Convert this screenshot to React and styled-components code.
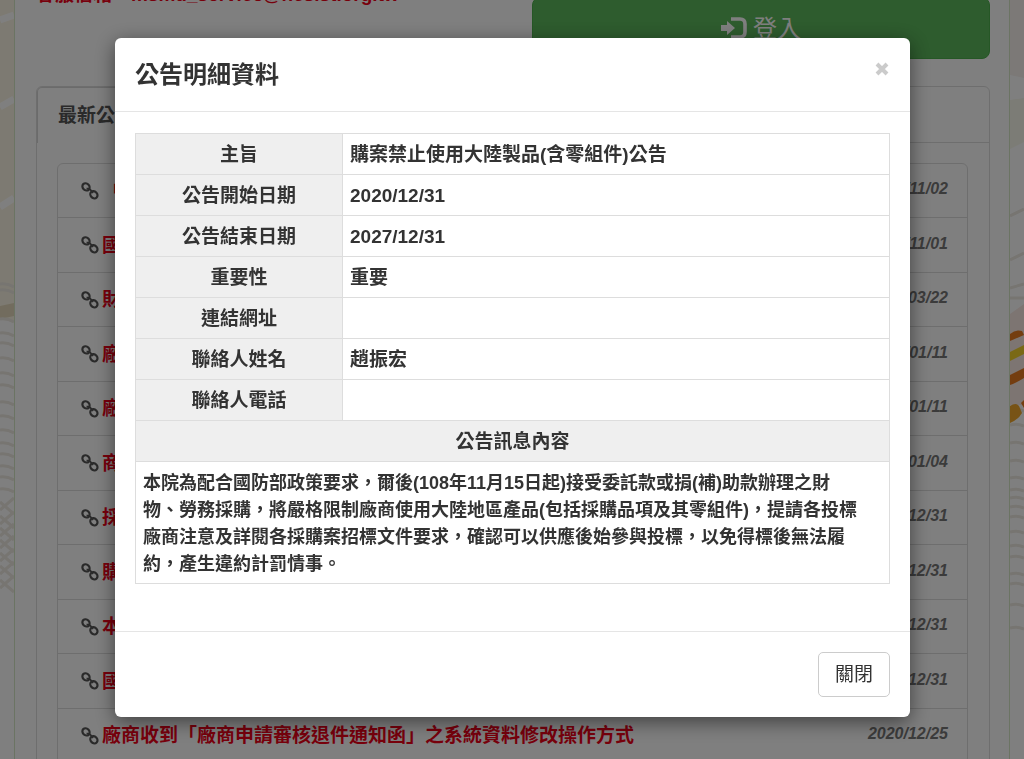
import React from 'react';
import styled, { createGlobalStyle } from 'styled-components';

const GlobalStyle = createGlobalStyle`
  * { box-sizing: border-box; }
  html, body { height: 100%; }
  body {
    margin: 0;
    overflow: hidden;
    background: #fff;
    color: #333;
    font-family: "Liberation Sans", "Noto Sans CJK TC", sans-serif;
    font-size: 19px;
    line-height: 27px;
  }
`;

const Page = styled.div`
  display: flex;
  height: 100vh;
  overflow: hidden;
`;

const Side = styled.div`
  flex: 0 0 14px;
  overflow: hidden;
  svg { display: block; }
`;

const Content = styled.div`
  flex: 1;
  min-width: 0;
  padding: 0 19px 0 21px;
  border: solid #d6e9c6;
  border-width: 0 1px;
`;

const Header = styled.header`
  display: flex;
  justify-content: space-between;
  align-items: flex-start;
  margin-top: -24px;
`;

const Contact = styled.p`
  margin: 0;
  color: #f00018;
  font-weight: 700;
  line-height: 38px;
  white-space: nowrap;
`;

const LoginButton = styled.button`
  display: flex;
  justify-content: center;
  align-items: center;
  gap: 6px;
  width: 48%;
  height: 62px;
  margin-top: 21px;
  border: 1px solid #4cae4c;
  border-radius: 8px;
  background: #5cb85c;
  color: #fff;
  font: inherit;
  font-size: 24px;
`;

const Panel = styled.section`
  margin-top: 27px;
  border: 1px solid #ddd;
  border-radius: 6px;
  height: 800px;
`;

const TabBar = styled.div`
  display: flex;
  height: 56px;
  border-bottom: 1px solid #ddd;
`;

const Tab = styled.button`
  height: 56px;
  padding: 0 20px;
  border: solid #d6d6d6;
  border-width: 1px 1px 0;
  border-radius: 5px 5px 0 0;
  background: #fff;
  color: #555;
  font: inherit;
  font-weight: 700;
`;

const NewsList = styled.ul`
  list-style: none;
  margin: 20px 21px 0 20px;
  padding: 0;
  border: 1px solid #ddd;
  border-radius: 6px;
`;

const NewsRow = styled.li`
  display: flex;
  align-items: center;
  height: 54px;
  padding: 0 19px 0 23px;
  border-bottom: 1px solid #ddd;
  &:nth-child(even) { height: 55px; }
`;

const NewsLink = styled.a`
  flex: 1;
  margin-left: 3px;
  color: #f00018;
  font-weight: 700;
  text-decoration: none;
  white-space: pre;
`;

const NewsDate = styled.time`
  padding-bottom: 4px;
  color: #777;
  font-size: 16px;
  font-style: italic;
  font-weight: 700;
`;

const Backdrop = styled.div`
  position: fixed;
  inset: 0;
  padding: 38px 16px 0 17px;
  background: rgba(0, 0, 0, 0.5);
`;

const Dialog = styled.div`
  max-width: 795px;
  margin: 0 auto;
  border-radius: 6px;
  background: #fff;
  box-shadow: 0 5px 20px rgba(0, 0, 0, 0.5);
`;

const DialogHeader = styled.div`
  display: flex;
  justify-content: space-between;
  align-items: flex-start;
  padding: 20px;
  border-bottom: 1px solid #e5e5e5;
`;

const Title = styled.h4`
  margin: 0;
  font-size: 24px;
  font-weight: 700;
  line-height: 33px;
`;

const CloseIcon = styled.button`
  display: flex;
  padding: 3px 0;
  border: 0;
  background: none;
  color: #000;
  opacity: 0.2;
`;

const DialogBody = styled.div`
  padding: 21px 20px 47px;
`;

const DetailTable = styled.table`
  width: 100%;
  border-collapse: collapse;
  table-layout: fixed;
  th, td {
    height: 41px;
    padding: 6px 7px;
    border: 1px solid #ddd;
    font-weight: 700;
    text-align: left;
  }
  th {
    background: #efefef;
    text-align: center;
  }
  th[scope="row"] { width: 207px; }
`;

const Message = styled.td`
  && {
    padding-top: 8px;
    padding-bottom: 5px;
    font-size: 18px;
  }
`;

const DialogFooter = styled.div`
  display: flex;
  justify-content: flex-end;
  padding: 20px;
  border-top: 1px solid #e5e5e5;
`;

const CloseButton = styled.button`
  padding: 8px 16px;
  border: 1px solid #ccc;
  border-radius: 5px;
  background: #fff;
  color: #333;
  font: inherit;
`;

const LinkIcon = () => (
  <svg width="18" height="18" viewBox="0 0 18 18" fill="none" stroke="#555" strokeWidth="2.2" aria-hidden="true">
    <ellipse cx="5" cy="4.9" rx="3.9" ry="3.3" transform="rotate(45 5 4.9)" />
    <ellipse cx="12.9" cy="12.8" rx="3.9" ry="3.3" transform="rotate(45 12.9 12.8)" />
    <path d="M5.6 6.6Q9.5 6 11.8 11.2" strokeWidth="1.8" />
  </svg>
);

const LoginIcon = () => (
  <svg width="26" height="22" viewBox="0 0 26 22" aria-hidden="true">
    <path d="M0 8h6V4l8 7-8 7v-4H0z" fill="#fff" />
    <path d="M10 2h9q5 0 5 5v8q0 5-5 5h-9" fill="none" stroke="#fff" strokeWidth="3.6" />
  </svg>
);

const CrossIcon = () => (
  <svg width="16" height="16" viewBox="0 0 16 16" aria-hidden="true">
    <path d="M3 3L13 13M13 3L3 13" stroke="currentColor" strokeWidth="4" />
  </svg>
);

const leftWaves = [284, 290, 319, 333, 343, 358, 373, 385, 402, 416, 430, 443, 454, 466, 477, 489];
const leftTangle = [502, 516, 528, 540, 553, 566, 580];

const LeftArt = () => (
  <svg width="14" height="759" fill="none" aria-hidden="true">
    <path d="M0 0H14V320H0z" fill="#fbf5e4" />
    <path d="M0 306L14 303V316L0 319z" fill="#e4d9bd" />
    <g stroke="#fff" strokeWidth="7">
      <path d="M0 20L14 15M0 107L14 99M0 207L14 198" />
    </g>
    <g stroke="#eeeae3" strokeWidth="3">
      {leftWaves.map((y) => <path key={y} d={`M0 ${y}Q7 ${y - 1} 14 ${y + 3}`} />)}
      {leftTangle.map((y) => <path key={y} d={`M0 ${y + 8}L14 ${y - 4}M0 ${y}L14 ${y + 12}`} />)}
    </g>
  </svg>
);

const rightWaves = [410, 425, 443, 461, 478, 490, 498, 507, 517, 532, 546, 557, 574, 584, 605, 628];

const RightArt = () => (
  <svg width="14" height="759" fill="none" aria-hidden="true">
    <path d="M0 0H14V78L0 75z" fill="#f8f3ef" />
    <path d="M0 100L14 98V142L0 149z" fill="#f8f8ec" />
    <g stroke="#eeeae3" strokeWidth="3">
      <path d="M0 216L14 209M0 260L14 253M0 288L14 284M0 298H14" />
      {rightWaves.map((y) => <path key={y} d={`M0 ${y}Q7 ${y - 2} 14 ${y + 1}`} />)}
    </g>
    <path d="M0 314L14 304V405H0z" fill="#faeae5" />
    <path d="M0 334Q6 329 12 331L14 335L0 341z" fill="#e87a20" />
    <path d="M0 352L14 345V354L0 361z" fill="#f4d32c" />
    <path d="M0 375L14 368V378Q6 383 0 385z" fill="#e87a20" />
    <path d="M0 406Q6 402 9 406L12 413Q8 420 0 423z" fill="#f0a72c" />
    <path d="M11 403L14 400V408z" fill="#e87a20" />
  </svg>
);

const news = [
  ['\u00a0\u00a0中', '2022/11/02'],
  ['國', '2022/11/01'],
  ['財', '2022/03/22'],
  ['廠', '2022/01/11'],
  ['廠', '2022/01/11'],
  ['商', '2021/01/04'],
  ['採', '2020/12/31'],
  ['購', '2020/12/31'],
  ['本', '2020/12/31'],
  ['國', '2020/12/31'],
  ['廠商收到「廠商申請審核退件通知函」之系統資料修改操作方式', '2020/12/25'],
];

const details = [
  ['主旨', '購案禁止使用大陸製品(含零組件)公告'],
  ['公告開始日期', '2020/12/31'],
  ['公告結束日期', '2027/12/31'],
  ['重要性', '重要'],
  ['連結網址', ''],
  ['聯絡人姓名', '趙振宏'],
  ['聯絡人電話', ''],
];

export default function App() {
  return (
    <>
      <GlobalStyle />
      <Page>
        <Side><LeftArt /></Side>
        <Content>
          <Header>
            <Contact>客服信箱：msmd_service@ncsist.org.tw</Contact>
            <LoginButton type="button"><LoginIcon />登入</LoginButton>
          </Header>
          <Panel>
            <TabBar><Tab type="button">最新公告</Tab></TabBar>
            <NewsList>
              {news.map(([title, date], i) => (
                <NewsRow key={i}>
                  <LinkIcon />
                  <NewsLink href="#">{title}</NewsLink>
                  <NewsDate>{date}</NewsDate>
                </NewsRow>
              ))}
            </NewsList>
          </Panel>
        </Content>
        <Side><RightArt /></Side>
      </Page>
      <Backdrop>
        <Dialog role="dialog" aria-modal="true" aria-labelledby="dialog-title">
          <DialogHeader>
            <Title id="dialog-title">公告明細資料</Title>
            <CloseIcon type="button" aria-label="關閉"><CrossIcon /></CloseIcon>
          </DialogHeader>
          <DialogBody>
            <DetailTable>
              <tbody>
                {details.map(([label, value]) => (
                  <tr key={label}>
                    <th scope="row">{label}</th>
                    <td>{value}</td>
                  </tr>
                ))}
                <tr><th colSpan={2} scope="col">公告訊息內容</th></tr>
                <tr>
                  <Message colSpan={2}>
                    本院為配合國防部政策要求，爾後(108年11月15日起)接受委託款或捐(補)助款辦理之財<br />
                    物、勞務採購，將嚴格限制廠商使用大陸地區產品(包括採購品項及其零組件)，提請各投標<br />
                    廠商注意及詳閱各採購案招標文件要求，確認可以供應後始參與投標，以免得標後無法履<br />
                    約，產生違約計罰情事。
                  </Message>
                </tr>
              </tbody>
            </DetailTable>
          </DialogBody>
          <DialogFooter>
            <CloseButton type="button">關閉</CloseButton>
          </DialogFooter>
        </Dialog>
      </Backdrop>
    </>
  );
}
